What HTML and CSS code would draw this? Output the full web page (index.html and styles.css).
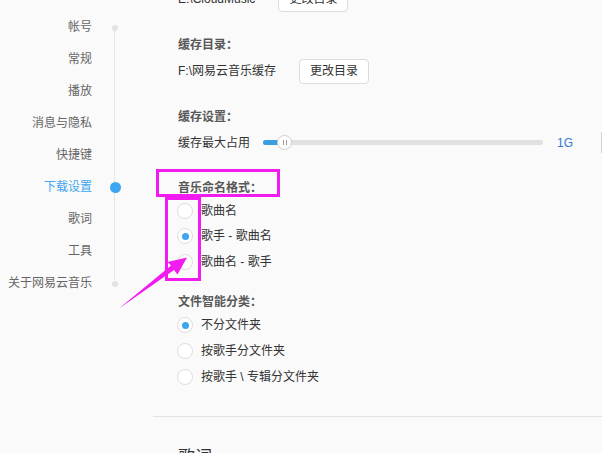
FILE: index.html
```html
<!DOCTYPE html>
<html lang="zh-CN">
<head>
<meta charset="utf-8">
<title>设置</title>
<link rel="stylesheet" href="styles.css">
</head>
<body>
<div class="page">
  <nav class="nav">
    <div class="nav-item"><span class="nav-label">帐号</span><span class="nav-mark"><i class="dot dot-end"></i></span></div>
    <div class="nav-item"><span class="nav-label">常规</span><span class="nav-mark"></span></div>
    <div class="nav-item"><span class="nav-label">播放</span><span class="nav-mark"></span></div>
    <div class="nav-item"><span class="nav-label">消息与隐私</span><span class="nav-mark"></span></div>
    <div class="nav-item"><span class="nav-label">快捷键</span><span class="nav-mark"></span></div>
    <div class="nav-item active"><span class="nav-label">下载设置</span><span class="nav-mark"><i class="dot dot-active"></i></span></div>
    <div class="nav-item"><span class="nav-label">歌词</span><span class="nav-mark"></span></div>
    <div class="nav-item"><span class="nav-label">工具</span><span class="nav-mark"></span></div>
    <div class="nav-item"><span class="nav-label">关于网易云音乐</span><span class="nav-mark"><i class="dot dot-end"></i></span></div>
  </nav>

  <main class="main">
    <section class="section">
      <div class="group">
        <div class="group-title">下载目录：</div>
        <div class="row"><span class="path">E:\CloudMusic</span><button class="btn">更改目录</button></div>
      </div>
      <div class="group">
        <div class="group-title">缓存目录：</div>
        <div class="row"><span class="path">F:\网易云音乐缓存</span><button class="btn">更改目录</button></div>
      </div>
      <div class="group">
        <div class="group-title">缓存设置：</div>
        <div class="row row-slider">
          <span class="path">缓存最大占用</span>
          <div class="slider">
            <div class="slider-fill" style="width:21px"></div>
            <div class="slider-knob"><i></i><i></i></div>
          </div>
          <span class="slider-value">1G</span>
        </div>
      </div>
      <div class="group">
        <div class="group-title">音乐命名格式：</div>
        <div class="options options-tight">
          <label class="option"><span class="radio"></span>歌曲名</label>
          <label class="option"><span class="radio checked"></span>歌手 - 歌曲名</label>
          <label class="option"><span class="radio"></span>歌曲名 - 歌手</label>
        </div>
      </div>
      <div class="group">
        <div class="group-title">文件智能分类：</div>
        <div class="options">
          <label class="option"><span class="radio checked"></span>不分文件夹</label>
          <label class="option"><span class="radio"></span>按歌手分文件夹</label>
          <label class="option"><span class="radio"></span>按歌手 \ 专辑分文件夹</label>
        </div>
      </div>
    </section>
    <section class="section section-next">
      <h2 class="section-title">歌词</h2>
    </section>
  </main>

  <div class="scroll-thumb"></div>

  <svg class="annotation" width="602" height="453" viewBox="0 0 602 453">
    <rect x="157.5" y="170.5" width="121" height="25" fill="none" stroke="#f21cf0" stroke-width="3"/>
    <rect x="166.5" y="198.5" width="33" height="81" fill="none" stroke="#f21cf0" stroke-width="3"/>
    <polygon points="119,308.5 171,265.5 167.5,262 187,257.5 177.5,274.5 174,270" fill="#f21cf0"/>
  </svg>
</div>
</body>
</html>
```

FILE: styles.css
```css
html, body {
  margin: 0;
  padding: 0;
  height: 100%;
  overflow: hidden;
}

body {
  background: #fafafa;
  font-family: "Liberation Sans", "Noto Sans CJK SC", sans-serif;
  font-size: 12px;
  color: #333;
}

.page {
  position: relative;
  display: flex;
  height: 100%;
}

/* ---------- sidebar ---------- */
.nav {
  position: relative;
  flex: 0 0 153px;
  padding-top: 11px;
  align-self: flex-start;
}

.nav::before {
  content: "";
  position: absolute;
  left: 114px;
  top: 28px;
  height: 256px;
  border-left: 1px dotted #d6d6d6;
}

.nav-item {
  display: flex;
  align-items: center;
  height: 32px;
}

.nav-label {
  width: 92px;
  text-align: right;
  color: #666;
  line-height: 16px;
}

.nav-item.active .nav-label {
  color: #3ea6f0;
}

.nav-mark {
  width: 46px;
  display: flex;
  justify-content: center;
  position: relative;
}

.dot {
  display: block;
  border-radius: 50%;
}

.dot-end {
  width: 6px;
  height: 6px;
  background: #e3e3e3;
  margin-top: 1px;
}

.dot-active {
  width: 11px;
  height: 11px;
  background: #3ea6f0;
}

/* ---------- content ---------- */
.main {
  flex: 1;
  margin-top: -37px;
}

.section {
  padding: 0 0 26px 25px;
  border-bottom: 1px solid #e3e3e3;
}

.section-next {
  border-bottom: none;
  padding-top: 29px;
}

.section-title {
  margin: 0;
  font-size: 17px;
  font-weight: normal;
  line-height: 24px;
  color: #333;
}

.group + .group {
  margin-top: 23px;
}

.group-title {
  font-weight: bold;
  color: #585858;
  line-height: 20px;
}

.row {
  display: flex;
  align-items: center;
  height: 26px;
  margin-top: 3px;
  gap: 23px;
}

.row-slider {
  height: 25px;
  gap: 14px;
}

.path {
  color: #333;
  line-height: 16px;
}

.btn {
  height: 25px;
  padding: 0 10px;
  border: 1px solid #dcdcdc;
  border-radius: 4px;
  background: #fff;
  font-family: inherit;
  font-size: 12px;
  color: #333;
  line-height: 23px;
}

.slider {
  position: relative;
  width: 280px;
  height: 5px;
  background: #e1e1e1;
  border-radius: 3px;
  margin-left: -1px;
}

.slider-fill {
  height: 100%;
  background: #3b9ede;
  border-radius: 3px 0 0 3px;
}

.slider-knob {
  position: absolute;
  left: 14px;
  top: -5px;
  width: 13px;
  height: 13px;
  border: 1px solid #cfcfcf;
  border-radius: 50%;
  background: #fff;
  display: flex;
  justify-content: center;
  align-items: center;
  gap: 2px;
  box-sizing: content-box;
}

.slider-knob i {
  display: block;
  width: 1px;
  height: 5px;
  background: #9a9a9a;
}

.slider-value {
  color: #2f7bd3;
  line-height: 16px;
}

.option {
  display: flex;
  align-items: center;
  height: 26px;
  gap: 8px;
  margin-left: -1px;
  color: #333;
  line-height: 16px;
}

.options-tight {
  margin-bottom: -5.5px;
}

.options-tight .option {
  height: 25.5px;
}

.radio {
  width: 14px;
  height: 14px;
  border: 1px solid #dedede;
  border-radius: 50%;
  background: #fff;
  display: flex;
  justify-content: center;
  align-items: center;
  box-sizing: content-box;
}

.radio.checked::after {
  content: "";
  width: 7px;
  height: 7px;
  border-radius: 50%;
  background: #3ea6f0;
}

/* ---------- overlays ---------- */
.scroll-thumb {
  position: absolute;
  right: 0;
  top: 132px;
  width: 1px;
  height: 21px;
  background: #d2d2d2;
}

.annotation {
  position: absolute;
  left: 0;
  top: 0;
  pointer-events: none;
}
```
